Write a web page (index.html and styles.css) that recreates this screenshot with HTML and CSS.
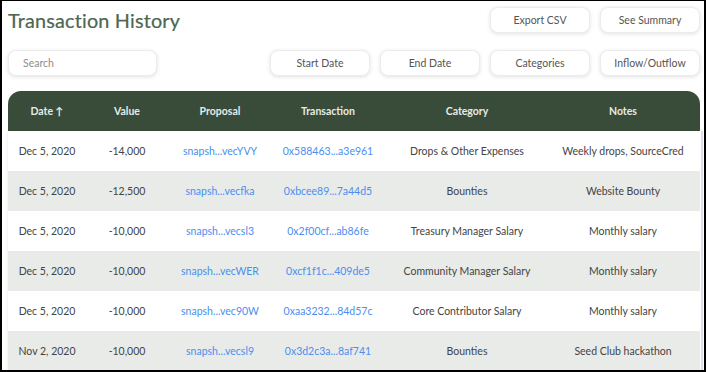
FILE: index.html
```html
<!DOCTYPE html>
<html lang="en">

<head>
    <meta charset="UTF-8">
    <meta name="viewport" content="width=device-width, initial-scale=1.0">
    <title>Transaction History</title>
    <link rel="stylesheet" href="styles.css">
</head>

<body>
    <div class="window">
        <div class="top">
            <h1 class="title">Transaction History</h1>
            <div class="actions">
                <button class="btn">Export CSV</button>
                <button class="btn">See Summary</button>
            </div>
        </div>

        <div class="filters">
            <input type="text" class="search" placeholder="Search" />
            <div class="actions">
                <button class="btn">Start Date</button>
                <button class="btn">End Date</button>
                <button class="btn">Categories</button>
                <button class="btn">Inflow/Outflow</button>
            </div>
        </div>

        <div class="table">
            <div class="row head">
                <div class="cell c-date">Date &uarr;</div>
                <div class="cell c-value">Value</div>
                <div class="cell c-prop">Proposal</div>
                <div class="cell c-tx">Transaction</div>
                <div class="cell c-cat">Category</div>
                <div class="cell c-notes">Notes</div>
            </div>
            <div class="body">
                <div class="row">
                    <div class="cell c-date">Dec 5, 2020</div>
                    <div class="cell c-value">-14,000</div>
                    <div class="cell c-prop"><a href="#">snapsh...vecYVY</a></div>
                    <div class="cell c-tx"><a href="#">0x588463...a3e961</a></div>
                    <div class="cell c-cat">Drops &amp; Other Expenses</div>
                    <div class="cell c-notes">Weekly drops, SourceCred</div>
                </div>
                <div class="row">
                    <div class="cell c-date">Dec 5, 2020</div>
                    <div class="cell c-value">-12,500</div>
                    <div class="cell c-prop"><a href="#">snapsh...vecfka</a></div>
                    <div class="cell c-tx"><a href="#">0xbcee89...7a44d5</a></div>
                    <div class="cell c-cat">Bounties</div>
                    <div class="cell c-notes">Website Bounty</div>
                </div>
                <div class="row">
                    <div class="cell c-date">Dec 5, 2020</div>
                    <div class="cell c-value">-10,000</div>
                    <div class="cell c-prop"><a href="#">snapsh...vecsl3</a></div>
                    <div class="cell c-tx"><a href="#">0x2f00cf...ab86fe</a></div>
                    <div class="cell c-cat">Treasury Manager Salary</div>
                    <div class="cell c-notes">Monthly salary</div>
                </div>
                <div class="row">
                    <div class="cell c-date">Dec 5, 2020</div>
                    <div class="cell c-value">-10,000</div>
                    <div class="cell c-prop"><a href="#">snapsh...vecWER</a></div>
                    <div class="cell c-tx"><a href="#">0xcf1f1c...409de5</a></div>
                    <div class="cell c-cat">Community Manager Salary</div>
                    <div class="cell c-notes">Monthly salary</div>
                </div>
                <div class="row">
                    <div class="cell c-date">Dec 5, 2020</div>
                    <div class="cell c-value">-10,000</div>
                    <div class="cell c-prop"><a href="#">snapsh...vec90W</a></div>
                    <div class="cell c-tx"><a href="#">0xaa3232...84d57c</a></div>
                    <div class="cell c-cat">Core Contributor Salary</div>
                    <div class="cell c-notes">Monthly salary</div>
                </div>
                <div class="row">
                    <div class="cell c-date">Nov 2, 2020</div>
                    <div class="cell c-value">-10,000</div>
                    <div class="cell c-prop"><a href="#">snapsh...vecsl9</a></div>
                    <div class="cell c-tx"><a href="#">0x3d2c3a...8af741</a></div>
                    <div class="cell c-cat">Bounties</div>
                    <div class="cell c-notes">Seed Club hackathon</div>
                </div>
            </div>
        </div>
    </div>
</body>

</html>
```

FILE: styles.css
```css
html,
body {
    width: 100%;
    height: 100%;
    margin: 0;
    padding: 0;
    background-color: #000;
    font-family: Lato, "Open Sans", Arial, sans-serif;
    font-size: 10.5px;
    color: #444;
}

* {
    box-sizing: border-box;
}

.window {
    width: 706px;
    height: 372px;
    border-style: solid;
    border-color: #000;
    border-width: 1px 2px 2px 2px;
    background-color: #fff;
    padding: 6px 0 0 6px;
    overflow: hidden;
}

.top {
    display: flex;
    justify-content: space-between;
    align-items: center;
    height: 26px;
    padding-right: 4px;
}

.title {
    margin: 0;
    font-size: 19.8px;
    font-weight: 400;
    color: #4d6650;
    line-height: 26px;
    letter-spacing: 0.2px;
    -webkit-text-stroke: 0.2px #4d6650;
}

.actions {
    display: flex;
    gap: 10px;
}

.btn {
    width: 100px;
    height: 26px;
    background-color: #fff;
    border: solid 1px #ececec;
    border-radius: 8px;
    box-shadow: 0 1px 4px rgba(0, 0, 0, 0.12);
    font-family: inherit;
    font-size: 10.5px;
    color: #555;
    outline: none;
    padding: 0;
}

.filters {
    display: flex;
    justify-content: space-between;
    align-items: center;
    margin-top: 17px;
    padding-right: 4px;
}

.search {
    width: 149px;
    height: 26px;
    border: solid 1px #ececec;
    border-radius: 8px;
    box-shadow: 0 1px 4px rgba(0, 0, 0, 0.12);
    padding: 0 14px;
    font-family: inherit;
    font-size: 10.5px;
    outline: none;
}

.search::placeholder {
    color: #8e8e8e;
}

.table {
    margin-top: 15px;
}

.row {
    display: flex;
    height: 40px;
    align-items: center;
    width: 692px;
}

.row.head {
    background-color: #384c39;
    color: #e6ebe6;
    border-radius: 13px 13px 0 0;
    font-weight: 700;
}

.body {
    width: 695px;
    border-right: solid 2px #dedfe6;
    box-shadow: -1px 0 3px rgba(0, 0, 0, 0.06);
}

.body .row:nth-child(even) {
    background-color: #e8ebe8;
}

.cell {
    text-align: center;
    white-space: nowrap;
}

.c-date {
    width: 78px;
}

.c-value {
    width: 82px;
}

.c-prop {
    width: 104px;
}

.c-tx {
    width: 112px;
}

.c-cat {
    width: 166px;
}

.c-notes {
    width: 146px;
}

.cell a {
    color: #4b8ef0;
    text-decoration: none;
}
```
